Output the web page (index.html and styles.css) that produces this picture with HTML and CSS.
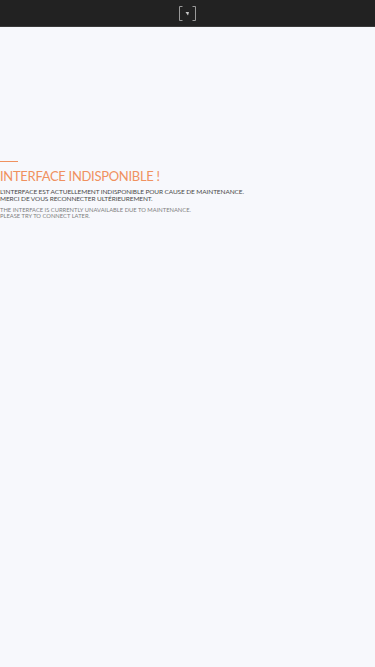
FILE: index.html
```html
<!DOCTYPE html>
<html lang="fr">
<head>
    <meta charset="UTF-8">
    <meta name="viewport" content="width=device-width, initial-scale=1.0">
    <title>Interface indisponible</title>
    <link rel="stylesheet" href="styles.css">
</head>
<body>
    <header class="topbar">
        <svg class="logo" width="17" height="15" viewBox="0 0 17 15" aria-hidden="true">
            <path d="M3.5 0.5 H0.5 V14.5 H3.5" fill="none" stroke="#9a9a9a" stroke-width="1"/>
            <path d="M13.5 0.5 H16.5 V14.5 H13.5" fill="none" stroke="#9a9a9a" stroke-width="1"/>
            <path d="M6.5 6 L10 6 L9 9.5 Z" fill="#c8c8c8"/>
        </svg>
    </header>

    <main class="content">
        <div class="rule"></div>
        <h1>Interface indisponible !</h1>
        <p class="msg-fr">L'interface est actuellement indisponible pour cause de maintenance.<br>Merci de vous reconnecter ultérieurement.</p>
        <p class="msg-en">The interface is currently unavailable due to maintenance.<br>Please try to connect later.</p>
    </main>
</body>
</html>
```

FILE: styles.css
```css
body, html {
    margin: 0;
    padding: 0;
    background-color: #f7f8fc;
    font-family: 'Lato', 'Liberation Sans', sans-serif;
}

.topbar {
    height: 26px;
    background-color: #222222;
    border-bottom: 1px solid #3a3a3a;
    display: flex;
    justify-content: center;
    align-items: center;
}

.logo {
    display: block;
}

.content {
    padding-top: 134px;
}

.rule {
    width: 18px;
    height: 0;
    border-top: 1px solid #f0915f;
}

h1 {
    margin: 7px 0 0;
    font-size: 13px;
    line-height: 14px;
    font-weight: 400;
    letter-spacing: -0.3px;
    text-transform: uppercase;
    color: #f0915f;
}

.msg-fr {
    margin: 5px 0 0;
    font-size: 6.5px;
    line-height: 7px;
    letter-spacing: -0.1px;
    text-transform: uppercase;
    color: #4a4a4a;
}

.msg-en {
    margin: 5px 0 0;
    font-size: 5.8px;
    line-height: 6px;
    letter-spacing: 0;
    text-transform: uppercase;
    color: #808080;
}
```
